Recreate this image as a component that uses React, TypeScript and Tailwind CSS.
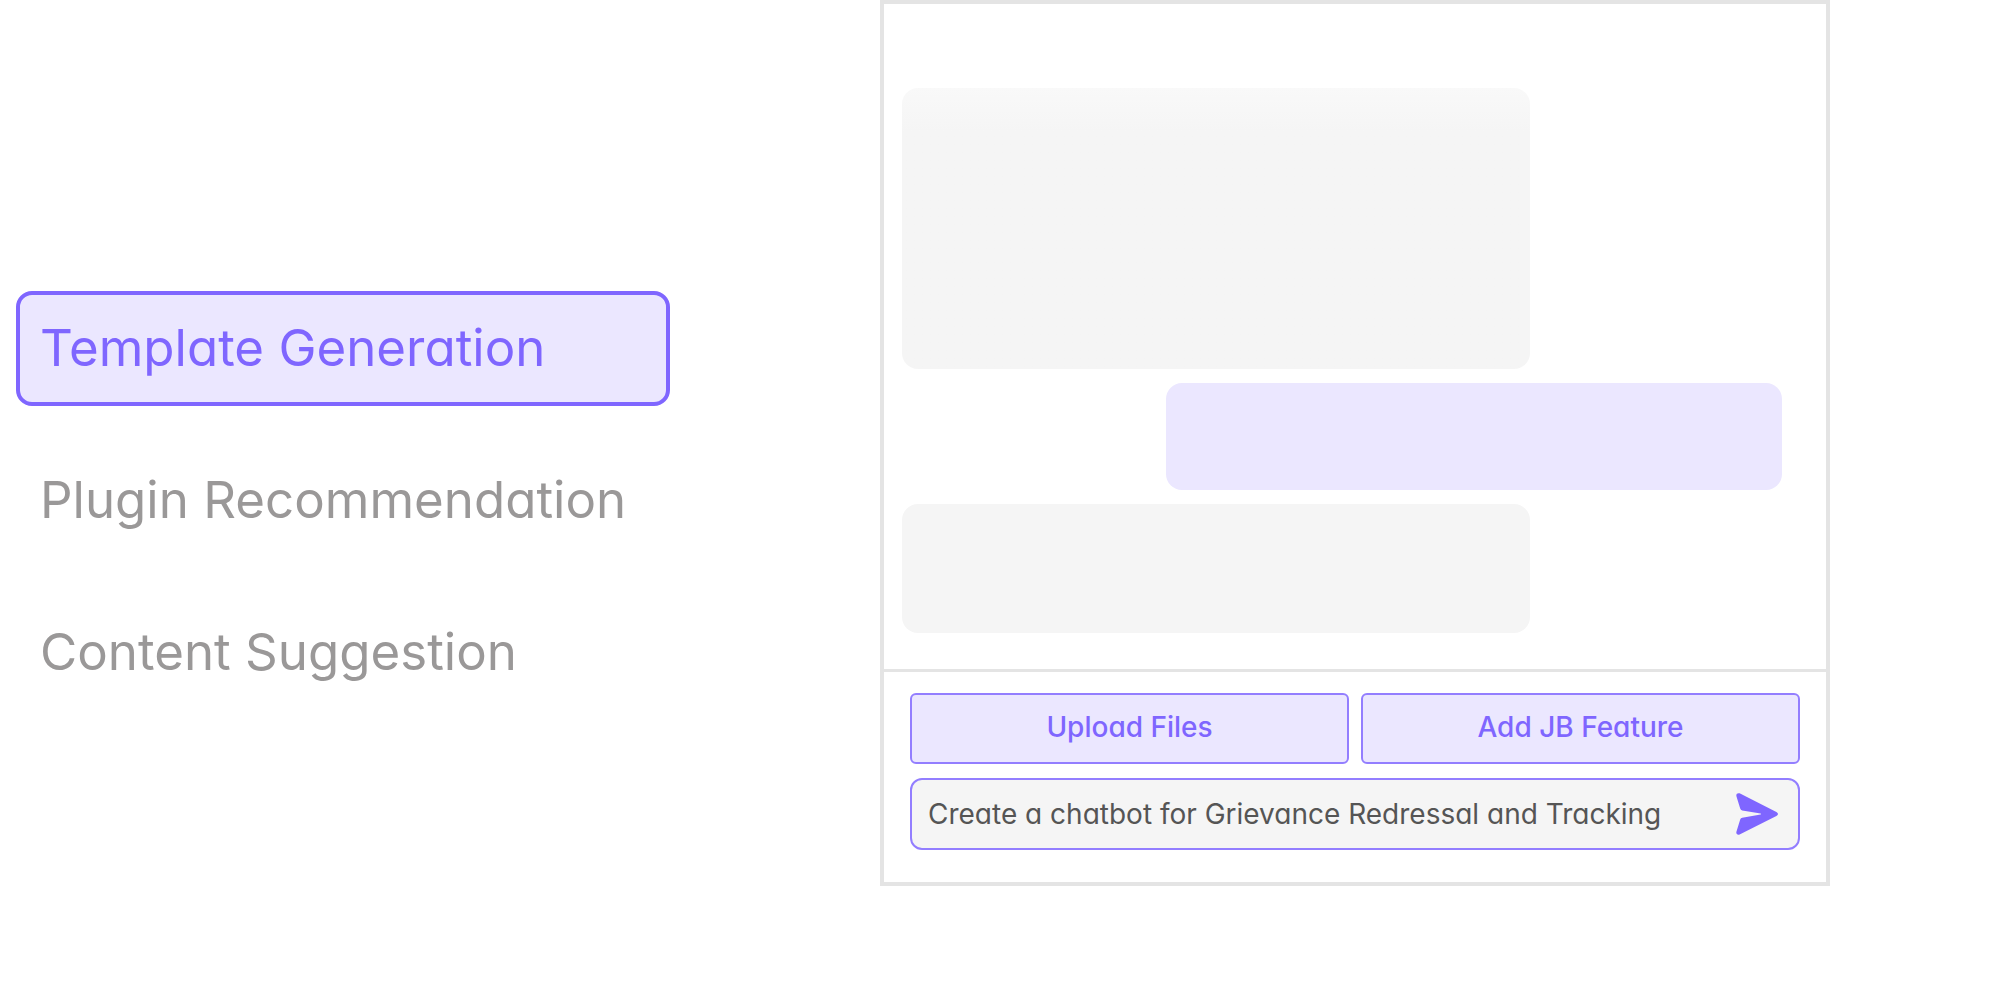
import { useState } from "react";

const sections = ["Template Generation", "Plugin Recommendation", "Content Suggestion"];

function SectionNav() {
  const [active, setActive] = useState(sections[0]);
  return (
    <nav className="flex flex-col gap-[37px] pt-[291px]">
      {sections.map((name) => (
        <button
          key={name}
          type="button"
          onClick={() => setActive(name)}
          className={
            name === active
              ? "flex h-[115px] items-center whitespace-nowrap rounded-2xl border-4 border-[#7f66ff] bg-[#ebe7ff] px-5 pb-0.5 text-left text-[51px] leading-[60px] text-[#7f66ff]"
              : "flex h-[115px] items-center whitespace-nowrap rounded-2xl border-4 border-transparent px-5 pb-0.5 text-left text-[51px] leading-[60px] text-[#9a9898]"
          }
        >
          {name}
        </button>
      ))}
    </nav>
  );
}

function SendIcon() {
  return (
    <svg viewBox="0 0 42 42" className="size-[42px]" fill="#7f66ff" aria-hidden="true">
      <path d="M3.6 0.3 L40.4 19 Q42 19.9 42 21 Q42 22.1 40.4 23 L3.6 41.6 Q1.8 42.2 0.8 41 Q0 40 0.5 38.4 L4.2 26.6 Q4.7 25 6.2 24.8 L24.6 21.4 Q25.4 21 24.6 20.6 L6.2 17.6 Q4.7 17.2 4.2 15.6 L0.5 3.4 Q0 1.8 0.9 0.8 Q1.9 -0.2 3.6 0.3 Z" />
    </svg>
  );
}

function ActionButton({ label }: { label: string }) {
  return (
    <button
      type="button"
      className="h-[71px] rounded-md border-2 border-[#937eff] bg-[#ebe7ff] pb-1 text-[28px] leading-9 font-medium text-[#7f66ff]"
    >
      {label}
    </button>
  );
}

function ChatPanel() {
  const [prompt, setPrompt] = useState("Create a chatbot for Grievance Redressal and Tracking");
  return (
    <section className="border-4 border-[#e4e4e4] bg-white">
      <div className="flex flex-col gap-[14px] pt-[84px] pb-9">
        <div className="ml-[18px] h-[281px] w-2/3 rounded-2xl bg-linear-to-b from-[#f9f9f9] to-[#f5f5f5] to-[44px]" />
        <div className="mr-11 h-[107px] w-[65.4%] self-end rounded-2xl bg-[#ebe7ff]" />
        <div className="ml-[18px] h-[129px] w-2/3 rounded-2xl bg-[#f5f5f5]" />
      </div>
      <div className="flex flex-col gap-[14px] border-t-3 border-[#e4e4e4] px-[26px] pt-[21px] pb-8">
        <div className="grid grid-cols-2 gap-3">
          <ActionButton label="Upload Files" />
          <ActionButton label="Add JB Feature" />
        </div>
        <form
          onSubmit={(e) => e.preventDefault()}
          className="flex h-[72px] items-center rounded-xl border-2 border-[#937eff] bg-[#f5f5f5] pr-5 pl-4"
        >
          <input
            type="text"
            aria-label="Prompt"
            value={prompt}
            onChange={(e) => setPrompt(e.target.value)}
            className="min-w-0 flex-1 bg-transparent text-[28px] leading-9 text-[#555555] outline-none"
          />
          <button type="submit" aria-label="Send">
            <SendIcon />
          </button>
        </form>
      </div>
    </section>
  );
}

export default function App() {
  return (
    <main className="grid grid-cols-[654fr_210fr_950fr_170fr] items-start bg-white pl-4 font-['Inter',sans-serif] [font-feature-settings:'cv11']">
      <SectionNav />
      <div />
      <ChatPanel />
    </main>
  );
}
